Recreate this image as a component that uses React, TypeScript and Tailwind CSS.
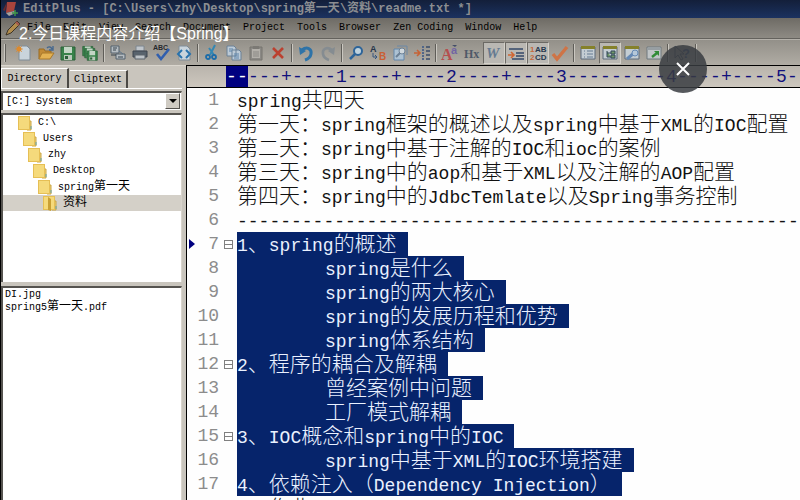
import React from "react";

const mono = "font-['Liberation_Mono','Noto_Sans_CJK_SC',monospace]";

type Run = { cjk: boolean; text: string };

function splitRuns(text: string): Run[] {
  const parts = text.match(/[\u3000-\u9fff\uff00-\uffef]+|[^\u3000-\u9fff\uff00-\uffef]+/g) ?? [];
  return parts.map((part) => ({ cjk: /[\u3000-\u9fff\uff00-\uffef]/.test(part), text: part }));
}

function Mixed({ text, wide }: { text: string; wide: string }) {
  return (
    <>
      {splitRuns(text).map((run, i) =>
        run.cjk ? (
          <span key={i} className={wide}>{run.text}</span>
        ) : (
          <React.Fragment key={i}>{run.text}</React.Fragment>
        )
      )}
    </>
  );
}

const menus = ["File", "Edit", "View", "Search", "Document", "Project", "Tools", "Browser", "Zen Coding", "Window", "Help"];

type Tool = { name: string; on?: boolean; art: React.ReactNode };

const page = <path d="M3 1h8l3 3v11H3z" fill="#c9d4dc" stroke="#7f8c97" />;
const floppy = (
  <>
    <path d="M1 2h14v13H1z" fill="#38824a" stroke="#2b6039" />
    <path d="M4 2h8v6H4z" fill="#c3d5c5" />
    <path d="M4 10h8v5H4z" fill="#b9c8ba" />
    <path d="M5 11h3v3H5z" fill="#2b6039" />
  </>
);
const win = (
  <>
    <path d="M1 2h14v12H1z" fill="#c4cdd3" stroke="#5d6b7a" />
    <path d="M1 1h14v3H1z" fill="#85812a" />
  </>
);

const groups: Tool[][] = [
  [
    { name: "New", art: <>{page}<circle cx="3" cy="4" r="2.5" fill="#e58a22" /><path d="M3 0v8M-1 4h8M0 1l6 6M6 1L0 7" stroke="#d98b35" strokeWidth=".7" /></> },
    { name: "Open", art: <><path d="M1 14V4h5l1 2h6v3" fill="#c18a35" stroke="#9a6a20" /><path d="M1 14L4 8h12l-4 6z" fill="#e3b253" stroke="#a8782b" /><path d="M9 3c2-2 4-1 5 1m1-3v4h-4" fill="none" stroke="#46688e" strokeWidth="1.4" /></> },
    { name: "Save", art: floppy },
    { name: "Save all", art: <><g transform="scale(.72)">{floppy}</g><g transform="translate(2 2) scale(.72)">{floppy}</g><g transform="translate(4.5 4.5) scale(.72)">{floppy}</g></> },
  ],
  [
    { name: "Print preview", art: <><path d="M1 1h8v7H1zM6 9h9v5H6z" fill="#b5bcc1" stroke="#53606c" /><path d="M3 3h4M3 5h3M1 10h5M8 12h5" stroke="#39444f" /><path d="M9 6l4 3" stroke="#5b7288" /></> },
    { name: "Print", art: <><path d="M4 1h8v5H4z" fill="#bfc5cb" stroke="#7d868e" /><path d="M1 6h14v6H1z" fill="#58636d" stroke="#3c454e" /><path d="M3 10h10v4H3z" fill="#bcc2c7" stroke="#5c656d" /></> },
    { name: "Spell check", art: <><text x="-1" y="5" fontSize="7" fontWeight="bold" fill="#26292d">ABC</text><path d="M3 9l4 5 8-10" fill="none" stroke="#315fae" strokeWidth="2.6" /></> },
    { name: "View source", art: <>{page}<path d="M6 5L2 9l4 4m4-8l4 4-4 4" fill="none" stroke="#2973ad" strokeWidth="2" /></> },
  ],
  [
    { name: "Cut", art: <><path d="M11 0L6 10M5 3l5 7" stroke="#3487b3" strokeWidth="2" /><circle cx="4" cy="12" r="2" fill="none" stroke="#1d6ca8" strokeWidth="1.8" /><circle cx="10" cy="12" r="2" fill="none" stroke="#1d6ca8" strokeWidth="1.8" /></> },
    { name: "Copy", art: <><path d="M1 1h7l2 2v8H1zM6 5h7l2 2v8H6z" fill="#bccad6" stroke="#6b8197" /><path d="M3 4h4M3 6h3M8 9h5M8 11h5M8 13h5" stroke="#5d84ab" /></> },
    { name: "Paste", art: <><path d="M2 2h12v13H2z" fill="#8b8985" stroke="#77756f" /><path d="M4 4h8v9H4z" fill="#b3b0aa" /><path d="M5 1h6v3H5z" fill="#7b7974" /><path d="M5 7h6M5 9h6M5 11h6" stroke="#8b8985" /></> },
    { name: "Delete", art: <path d="M3 3l10 10M13 3L3 13" stroke="#bb4130" strokeWidth="2.6" /> },
  ],
  [
    { name: "Undo", art: <><path d="M4 5c5-4 10-1 9 4-.5 3-3 5-6 6" fill="none" stroke="#2e73a8" strokeWidth="3" /><path d="M1 2l1 8 6-4z" fill="#2e73a8" /></> },
    { name: "Redo", art: <><path d="M12 5C7 1 2 4 3 9c.5 3 3 5 6 6" fill="none" stroke="#858c91" strokeWidth="2.6" /><path d="M15 2l-1 8-6-4z" fill="#858c91" /></> },
  ],
  [
    { name: "Find", art: <><circle cx="10" cy="6" r="4" fill="#bed2de" stroke="#2d6499" strokeWidth="2" /><path d="M7 9l-5 5" stroke="#2d6499" strokeWidth="2.5" /></> },
    { name: "Replace", art: <><text x="0" y="7" fontSize="9" fontWeight="bold" fill="#26364b">A</text><text x="9" y="15" fontSize="10" fontWeight="bold" fill="#c96034">B</text><path d="M3 8v4h4m-2-2l2 2-2 2" fill="none" stroke="#36577e" /></> },
    { name: "Find in files", art: <><path d="M2 4h10v11H2z" fill="#adc2d3" stroke="#6386aa" /><path d="M5 1h10v9" fill="none" stroke="#6b88a6" /><circle cx="10" cy="6" r="3" fill="#d0d8dd" stroke="#6c8196" /><path d="M8 8l-4 4" stroke="#6c8196" strokeWidth="2" /></> },
    { name: "Go to line", art: <><path d="M0 8h5m-2-3l3 3-3 3" fill="none" stroke="#c76335" strokeWidth="1.6" /><path d="M12 2h4M12 6h4M12 10h4M12 14h4" stroke="#3a4c6b" strokeWidth="1.4" /><path d="M9 1v14" stroke="#50668a" strokeWidth="2" strokeDasharray="2 1" /></> },
  ],
  [
    { name: "Font", art: <><text x="-1" y="15" fontSize="16" fontWeight="bold" fill="#b54f4f" fontFamily="Liberation Serif">A</text><text x="9" y="9" fontSize="11" fontWeight="bold" fill="#7164a5">a</text><path d="M10 0h5l-2 2z" fill="#434e68" /></> },
    { name: "Hex viewer", art: <text x="0" y="13" fontSize="12" fontWeight="bold" fill="#4e5968" fontFamily="Liberation Serif">Hx</text> },
    { name: "Word wrap", on: true, art: <text x="0" y="13" fontSize="15" fontStyle="italic" fontWeight="bold" fill="#647a91" fontFamily="Liberation Serif">W</text> },
    { name: "Auto indent", on: true, art: <><path d="M1 4h14M8 8h8M8 11h8M4 14h12" stroke="#34486a" strokeWidth="1.5" /><path d="M0 10h5m-2-3l3 3-3 3" fill="none" stroke="#d06633" strokeWidth="1.6" /></> },
    { name: "Line numbers", on: true, art: <><text x="0" y="7" fontSize="8" fontWeight="bold" fill="#c5673d">1</text><text x="0" y="15" fontSize="8" fontWeight="bold" fill="#c5673d">2</text><text x="5" y="7" fontSize="8" fontWeight="bold" fill="#27384f">AB</text><text x="5" y="15" fontSize="8" fontWeight="bold" fill="#27384f">CD</text></> },
    { name: "Check syntax", art: <path d="M1 9l4 5L15 2" fill="none" stroke="#cf7446" strokeWidth="3.4" /> },
  ],
  [
    { name: "Document selector", art: <>{win}<path d="M4 6h1M7 6h6M4 9h1M7 9h6M4 12h1M7 12h6" stroke="#647a91" /></> },
    { name: "Directory window", on: true, art: <>{win}<path d="M5 6v6h4M5 8h4M9 6h4v3H9zM9 10h4v3H9z" fill="#6f9867" stroke="#35485b" /></> },
    { name: "Preferences", art: <>{win}<path d="M3 14l7-6" stroke="#6589b5" strokeWidth="3" /><circle cx="11" cy="8" r="3" fill="#b5c8d9" stroke="#6589b5" /></> },
    { name: "Browser", art: <><path d="M1 2h14v12H1z" fill="#c0c5c7" stroke="#6e787e" /><path d="M2 4h12" stroke="#6e787e" /><path d="M6 12l5-4" stroke="#318b37" strokeWidth="2.5" /><path d="M8 6h5v5z" fill="#318b37" /></> },
  ],
  [
    { name: "Context help", art: <><path d="M1 1v12l3-3 3 5 2-1-3-5h4z" fill="none" stroke="#4c5664" /><text x="8" y="13" fontSize="13" fontWeight="bold" fill="#3d547e">?</text></> },
  ],
];

const folders = [
  { name: "C:\\", pad: "pl-[15px]" },
  { name: "Users", pad: "pl-[20px]" },
  { name: "zhy", pad: "pl-[25px]" },
  { name: "Desktop", pad: "pl-[30px]" },
  { name: "spring第一天", pad: "pl-[35px]" },
  { name: "资料", pad: "pl-[40px]", selected: true },
];

const files = ["DI.jpg", "spring5第一天.pdf"];

type Line = { text: string; fold?: boolean; tab?: boolean; selected?: boolean };

const lines: Line[] = [
  { text: "spring共四天" },
  { text: "第一天：spring框架的概述以及spring中基于XML的IOC配置" },
  { text: "第二天：spring中基于注解的IOC和ioc的案例" },
  { text: "第三天：spring中的aop和基于XML以及注解的AOP配置" },
  { text: "第四天：spring中的JdbcTemlate以及Spring事务控制" },
  { text: "-----------------------------------------------------" },
  { text: "1、spring的概述", fold: true, selected: true },
  { text: "spring是什么", tab: true, selected: true },
  { text: "spring的两大核心", tab: true, selected: true },
  { text: "spring的发展历程和优势", tab: true, selected: true },
  { text: "spring体系结构", tab: true, selected: true },
  { text: "2、程序的耦合及解耦", fold: true, selected: true },
  { text: "曾经案例中问题", tab: true, selected: true },
  { text: "工厂模式解耦", tab: true, selected: true },
  { text: "3、IOC概念和spring中的IOC", fold: true, selected: true },
  { text: "spring中基于XML的IOC环境搭建", tab: true, selected: true },
  { text: "4、依赖注入（Dependency Injection）", selected: true },
  { text: "5、作业" },
];

const ruler = "-----+----1----+----2----+----3---------4----+----5--";

function Folder({ open }: { open?: boolean }) {
  return (
    <svg viewBox="0 0 14 15" className="h-[15px] w-[14px] shrink-0" aria-hidden="true">
      <path d="M9 5h4v9H9z" fill="#eed278" stroke="#c9a545" />
      <path d="M0 0h12v14H0z" fill="#e6bf55" />
      <path d="M1 1h10v12H1z" fill="#f5da7c" />
      {open && <path d="M5 1l3 2v12l-3-1z" fill="#c9a035" />}
      <path d="M13 10v3" stroke="#65a3aa" />
    </svg>
  );
}

function Separator() {
  return (
    <span className="flex h-[18px] w-[6px] justify-center">
      <span className="w-px bg-[#5f5d58]" />
      <span className="w-px bg-[#cac7c0]" />
    </span>
  );
}

function Row({ line, number }: { line: Line; number: number }) {
  return (
    <li className="flex h-6 items-center whitespace-pre">
      <span className="flex w-2 shrink-0 justify-end">
        {number === 7 && (
          <svg viewBox="0 0 6 10" className="h-[10px] w-[6px]" aria-hidden="true"><path d="M0 0l6 5-6 5z" fill="#000080" /></svg>
        )}
      </span>
      <span className="w-6 shrink-0 text-right text-[#8c8c8c]">{number}</span>
      <span className="flex w-[18px] shrink-0 justify-center">
        {line.fold && (
          <button aria-label={`Fold line ${number}`} className="flex size-[9px] items-center justify-center border border-[#808080]">
            <span className="h-px w-[7px] bg-[#808080]" />
          </button>
        )}
      </span>
      <span className={`h-6 leading-7 ${line.tab ? "pl-[88px]" : ""} ${line.selected ? "bg-[#06246b] pr-[11px] text-[#eaf1ff]" : "text-[#111]"}`}>
        <Mixed text={line.text} wide="text-[21px] font-light" />
      </span>
    </li>
  );
}

export default function App() {
  return (
    <div className={`relative flex h-screen flex-col overflow-hidden border-l border-black bg-[#c9c5bd] text-[10px] text-black ${mono}`}>
      <header className="flex h-[18px] shrink-0 items-center gap-1 bg-linear-to-b from-[#131f3a] to-[#1b3260] pl-[2px] text-[12px] font-bold text-[#8c8e91]">
        <svg viewBox="0 0 16 16" className="size-4" aria-hidden="true">
          <path d="M4 1h9l-2 9-8 2z" fill="#a8443c" />
          <path d="M3 12l8-2 2 2-7 3z" fill="#a4a29c" />
          <path d="M2 10l2-9-4 8z" fill="#6d292a" />
          <path d="M12 9v6M9 12h6" stroke="#3c9348" strokeWidth="1.5" />
        </svg>
        <h1 className="whitespace-pre leading-[18px]">
          <Mixed text={"EditPlus - [C:\\Users\\zhy\\Desktop\\spring第一天\\资料\\readme.txt *]"} wide="text-[12px]" />
        </h1>
      </header>

      <nav className="flex h-[21px] shrink-0 items-center gap-3 border-b border-[#64625d] bg-linear-to-b from-[#6e6b65] to-[#8e8b84] pl-1">
        <svg viewBox="0 0 16 16" className="-mr-[6px] size-4" aria-hidden="true">
          <path d="M1 15l2-5 9-9 3 3-9 9z" fill="#b18c4c" stroke="#3d3427" />
          <path d="M11 2l3 3" stroke="#a35850" strokeWidth="2" />
        </svg>
        {menus.map((m) => (
          <button key={m} className="whitespace-pre leading-4">{m}</button>
        ))}
      </nav>

      <div className="flex h-[26px] shrink-0 items-center border-t border-[#b4b1aa] bg-linear-to-b from-[#939089] to-[#b0aca4]" role="toolbar" aria-label="Standard">
        <span className="ml-[3px] mr-[7px] h-[18px] w-[2px] border-l border-[#cac7c0] bg-[#5f5d58]" />
        {groups.map((group, g) => (
          <React.Fragment key={g}>
            {g > 0 && <Separator />}
            {group.map((tool) => (
              <button
                key={tool.name}
                aria-label={tool.name}
                className={`flex h-[22px] w-[22px] items-center justify-center ${tool.on ? "border border-b-[#d4d1ca] border-l-[#6b6964] border-r-[#d4d1ca] border-t-[#6b6964] bg-[#bab8b3]" : ""}`}
              >
                <svg viewBox="0 0 16 16" className="size-4 shrink-0 overflow-visible font-['Liberation_Sans',sans-serif]" aria-hidden="true">{tool.art}</svg>
              </button>
            ))}
          </React.Fragment>
        ))}
        <Separator />
      </div>

      <main className="flex min-h-0 flex-1">
        <aside className="flex w-[185px] shrink-0 flex-col border-t border-[#dad6ce] pr-1">
          <div className="flex h-[22px] shrink-0 items-end gap-px" role="tablist">
            <button role="tab" aria-selected="true" className="h-5 w-[68px] border-l border-r-2 border-t border-l-white border-r-[#4b4945] border-t-white text-center">Directory</button>
            <button role="tab" aria-selected="false" className="h-[18px] w-[58px] border-r-2 border-t border-r-[#4b4945] border-t-white text-center">Cliptext</button>
          </div>
          <div className="h-[3px] shrink-0 border-t border-white" />
          <div className="relative h-[19px] shrink-0 border-l-2 border-r border-t-2 border-[#55534f] border-r-[#d8d4cc] bg-white">
            <select aria-label="Drive" className="h-full w-full appearance-none bg-transparent pl-[3px] leading-4 outline-none" defaultValue="c">
              <option value="c">[C:] System</option>
            </select>
            <span className="pointer-events-none absolute right-px top-0 flex h-4 w-[15px] items-center justify-center border border-b-[#55534f] border-l-white border-r-[#55534f] border-t-white bg-[#cfcbc3]">
              <svg viewBox="0 0 8 4" className="h-1 w-2" aria-hidden="true"><path d="M0 0h8L4 4z" /></svg>
            </span>
          </div>
          <ul className="mt-[3px] h-[169px] shrink-0 border-l-2 border-r border-t-2 border-[#55534f] border-r-[#d8d4cc] bg-white">
            {folders.map((f) => (
              <li key={f.name} className={`flex h-4 items-center gap-[6px] ${f.pad} ${f.selected ? "bg-[#d4d0c8]" : ""}`}>
                <Folder open={f.selected} />
                <span className="whitespace-pre leading-4"><Mixed text={f.name} wide="text-[12px]" /></span>
              </li>
            ))}
          </ul>
          <ul className="mt-[4px] flex-1 border-l-2 border-r border-t-2 border-[#55534f] border-r-[#d8d4cc] bg-white pl-[2px]">
            {files.map((f) => (
              <li key={f} className="h-3 leading-[14px]"><Mixed text={f} wide="text-[12px]" /></li>
            ))}
          </ul>
        </aside>

        <section className="min-w-0 flex-1 overflow-hidden border-l border-black bg-[#fefefe]">
          <div className="flex h-[23px] border-y border-black bg-linear-to-b from-[#b9b4ac] to-[#cdc7be] pl-[39px] text-[18px] leading-[22px] text-[#10107c]">
            <span className="flex bg-[#000080] text-white">
              <span className="w-[11px] text-center">-</span>
              <span className="w-[11px] text-center">-</span>
            </span>
            {ruler.slice(2).split("").map((c, i) => (
              <span key={i} className="w-[11px] shrink-0 text-center">{c}</span>
            ))}
          </div>
          <ol className="text-[18px] leading-6">
            {lines.map((line, i) => (
              <Row key={i} line={line} number={i + 1} />
            ))}
          </ol>
        </section>
      </main>

      <p className="absolute left-[18px] top-[22px] whitespace-nowrap font-['Liberation_Sans','Noto_Sans_CJK_SC',sans-serif] text-[16px] leading-6 text-white">2.今日课程内容介绍【Spring】</p>
      <button aria-label="Close" className="absolute right-[93px] top-[45px] flex size-12 items-center justify-center rounded-full bg-[#383c41]/85">
        <svg viewBox="0 0 14 14" className="size-[14px]" aria-hidden="true"><path d="M1 1l12 12M13 1L1 13" stroke="#fff" strokeWidth="2" /></svg>
      </button>
    </div>
  );
}
